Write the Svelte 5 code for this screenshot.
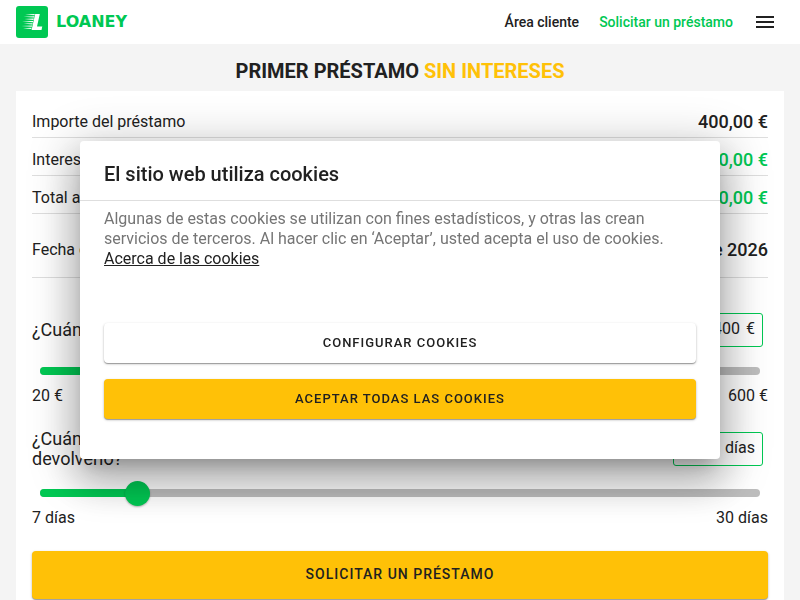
<script>
  let amount = 400;
  let days = 10;

  const minAmount = 20;
  const maxAmount = 600;
  const minDays = 7;
  const maxDays = 30;

  let cookiesOpen = true;

  $: total = `${amount},00 €`;
  $: amountFill = ((amount - minAmount) / (maxAmount - minAmount)) * 100;
  $: daysFill = ((days - minDays) / (maxDays - minDays)) * 100;

  // Keep only the digits typed in a field and hold them within its range
  function parseField(event, min, max) {
    const value = parseInt(event.target.value, 10) || min;
    return Math.min(max, Math.max(min, value));
  }

  function closeCookies() {
    cookiesOpen = false;
  }
</script>

<header class="topbar">
  <a class="brand" href="/">
    <svg class="brand-logo" viewBox="0 0 32 32" aria-hidden="true">
      <rect width="32" height="32" rx="3" fill="#00c853" />
      <path d="M19.2 8h4.6l-2.8 12.400h5.300L25.500 24H15.600z" fill="#fff" />
      <path
        d="M9 8.400l9.800-.4-.3 1.300zM7.500 10.700l10.800-.4-.3 1.300zM8.500 13l9.300-.4-.3 1.300zM6 15.300l11.200-.4-.3 1.300zM7.500 17.600l9.200-.4-.3 1.300zM5.500 19.900l10.600-.4-.3 1.300zM7 22.200l8.600-.4-.3 1.300z"
        fill="#fff"
      />
    </svg>
    <span class="brand-name">LOANEY</span>
  </a>
  <nav class="nav">
    <a class="nav-link" href="/login">Área cliente</a>
    <a class="nav-link nav-link-accent" href="/solicitar">Solicitar un préstamo</a>
    <button class="menu-button" type="button" aria-label="Menú">
      <svg viewBox="0 0 24 24" width="24" height="24" aria-hidden="true">
        <path d="M3 6h18v2H3zM3 11h18v2H3zM3 16h18v2H3z" fill="currentColor" />
      </svg>
    </button>
  </nav>
</header>

<main class="page">
  <h1 class="headline">PRIMER PRÉSTAMO <span>SIN INTERESES</span></h1>

  <form class="calculator" on:submit|preventDefault>
    <dl class="summary">
      <div class="summary-row">
        <dt>Importe del préstamo</dt>
        <dd>{total}</dd>
      </div>
      <div class="summary-row">
        <dt>Intereses</dt>
        <dd class="green">0,00 €</dd>
      </div>
      <div class="summary-row">
        <dt>Total a devolver</dt>
        <dd class="green">{total}</dd>
      </div>
      <div class="summary-row summary-date">
        <dt>Fecha de devolución</dt>
        <dd>15 de enero de 2026</dd>
      </div>
    </dl>

    <section class="field">
      <div class="field-head">
        <label for="amount">¿Cuánto dinero necesita?</label>
        <div class="field-value">
          <input
            id="amount"
            type="text"
            value={amount}
            on:change={(e) => (amount = parseField(e, minAmount, maxAmount))}
          />
          <span>€</span>
        </div>
      </div>
      <div class="slider">
        <div class="rail"><div class="rail-fill" style="width: {amountFill}%"></div></div>
        <input type="range" aria-label="Importe" min={minAmount} max={maxAmount} step="10" bind:value={amount} />
      </div>
      <div class="limits"><span>{minAmount} €</span><span>{maxAmount} €</span></div>
    </section>

    <section class="field">
      <div class="field-head">
        <label for="days">¿Cuándo quiere<br />devolverlo?</label>
        <div class="field-value">
          <input
            id="days"
            type="text"
            value={days}
            on:change={(e) => (days = parseField(e, minDays, maxDays))}
          />
          <span>días</span>
        </div>
      </div>
      <div class="slider">
        <div class="rail"><div class="rail-fill" style="width: {daysFill}%"></div></div>
        <input type="range" aria-label="Plazo" min={minDays} max={maxDays} bind:value={days} />
      </div>
      <div class="limits"><span>{minDays} días</span><span>{maxDays} días</span></div>
    </section>

    <button class="btn btn-primary btn-large" type="submit">Solicitar un préstamo</button>
  </form>
</main>

{#if cookiesOpen}
  <div class="overlay">
    <div class="dialog" role="dialog" aria-labelledby="cookies-title">
      <h2 id="cookies-title" class="dialog-title">El sitio web utiliza cookies</h2>
      <div class="dialog-text">
        Algunas de estas cookies se utilizan con fines estadísticos, y otras las crean servicios de
        terceros. Al hacer clic en ‘Aceptar’, usted acepta el uso de cookies.
        <a href="/cookies">Acerca de las cookies</a>
      </div>
      <div class="dialog-actions">
        <button class="btn" type="button">Configurar cookies</button>
        <button class="btn btn-primary" type="button" on:click={closeCookies}>Aceptar todas las cookies</button>
      </div>
    </div>
  </div>
{/if}

<style>
  :global(body) {
    margin: 0;
    background: #f4f4f4;
    color: #212121;
    font-family: Roboto, sans-serif;
    font-size: 16px;
    line-height: 20px;
  }

  /* Top bar */
  .topbar {
    display: flex;
    align-items: center;
    justify-content: space-between;
    height: 44px;
    padding: 0 16px;
    background: #fff;
  }

  .brand {
    display: flex;
    align-items: center;
    gap: 8px;
    color: #00c853;
    text-decoration: none;
  }

  .brand-logo {
    width: 32px;
    height: 32px;
  }

  .brand-name {
    font-family: "DejaVu Sans", sans-serif;
    font-size: 16px;
    font-weight: 700;
  }

  .nav {
    display: flex;
    align-items: center;
    gap: 20px;
  }

  .nav-link {
    color: #212121;
    font-size: 14px;
    font-weight: 500;
    text-decoration: none;
  }

  .nav-link-accent {
    color: #00c853;
  }

  .menu-button {
    display: flex;
    padding: 0 7px 0 0;
    border: 0;
    background: none;
    color: #212121;
    cursor: pointer;
  }

  /* Calculator */
  .page {
    padding: 0 16px 16px;
  }

  .headline {
    margin: 0;
    padding: 17px 0 10px;
    font-size: 20px;
    font-weight: 700;
    line-height: 20px;
    text-align: center;
  }

  .headline span {
    color: #ffc107;
  }

  .calculator {
    padding: 9px 16px 16px;
    background: #fff;
  }

  .summary {
    margin: 0 0 35px;
  }

  .summary-row {
    display: flex;
    align-items: center;
    justify-content: space-between;
    padding: 12px 0 5px;
    border-bottom: 1px solid #dedede;
  }

  .summary-row dd {
    margin: 0;
    font-size: 18px;
    font-weight: 500;
  }

  .summary-row .green {
    color: #00c853;
  }

  .summary-date {
    padding: 26px 0 17px;
  }

  .field {
    margin-bottom: 23px;
  }

  .field-head {
    display: flex;
    align-items: center;
    justify-content: space-between;
    padding-right: 5px;
    font-size: 18px;
  }

  .field-value {
    display: flex;
    align-items: center;
    gap: 6px;
    box-sizing: border-box;
    width: 90px;
    height: 34px;
    padding: 0 7px 2px;
    border: 1px solid #00c853;
    border-radius: 3px;
    font-size: 16px;
  }

  .field-value input {
    flex: 1;
    min-width: 0;
    padding: 0;
    border: 0;
    background: none;
    color: inherit;
    font: inherit;
    text-align: right;
  }

  .slider {
    display: grid;
    align-items: center;
    height: 26px;
    margin-top: 11px;
  }

  .rail,
  .slider input {
    grid-area: 1 / 1;
  }

  .rail {
    height: 8px;
    margin: 0 8px;
    border-radius: 4px;
    background: #bdbdbd;
    overflow: hidden;
  }

  .rail-fill {
    height: 100%;
    background: #00c853;
  }

  .slider input {
    width: 100%;
    height: 26px;
    margin: 0;
    background: none;
    appearance: none;
    cursor: pointer;
  }

  .slider input::-webkit-slider-thumb {
    width: 25px;
    height: 25px;
    border-radius: 50%;
    background: #00c853;
    box-shadow: 0 1px 2px rgba(0, 0, 0, 0.3);
    appearance: none;
  }

  .limits {
    display: flex;
    justify-content: space-between;
    margin-top: 2px;
  }

  /* Buttons */
  .btn {
    display: block;
    width: 100%;
    height: 40px;
    padding: 0 16px 2px;
    border: 0;
    border-radius: 4px;
    background: #fff;
    box-shadow: 0 1px 3px rgba(0, 0, 0, 0.2), 0 1px 1px rgba(0, 0, 0, 0.3);
    color: #212121;
    font-family: inherit;
    font-size: 13px;
    font-weight: 500;
    letter-spacing: 1px;
    text-transform: uppercase;
    cursor: pointer;
  }

  .btn-primary {
    background: #ffc107;
  }

  .btn-large {
    height: 48px;
    font-size: 14px;
  }

  /* Cookie dialog */
  .overlay {
    position: fixed;
    inset: 0;
    display: flex;
    align-items: center;
    justify-content: center;
  }

  .dialog {
    width: 80%;
    border-radius: 4px;
    background: #fff;
    box-shadow:
      0 11px 15px -7px rgba(0, 0, 0, 0.2),
      0 24px 38px 3px rgba(0, 0, 0, 0.18),
      0 9px 46px 8px rgba(0, 0, 0, 0.22);
  }

  .dialog-title {
    margin: 0;
    padding: 21px 24px 14px;
    border-bottom: 1px solid #dedede;
    font-size: 20px;
    font-weight: 500;
    line-height: 24px;
  }

  .dialog-text {
    padding: 8px 24px 54px;
    color: #757575;
  }

  .dialog-text a {
    display: table;
    color: #212121;
  }

  .dialog-actions {
    display: flex;
    flex-direction: column;
    gap: 16px;
    padding: 0 24px 40px;
  }
</style>
